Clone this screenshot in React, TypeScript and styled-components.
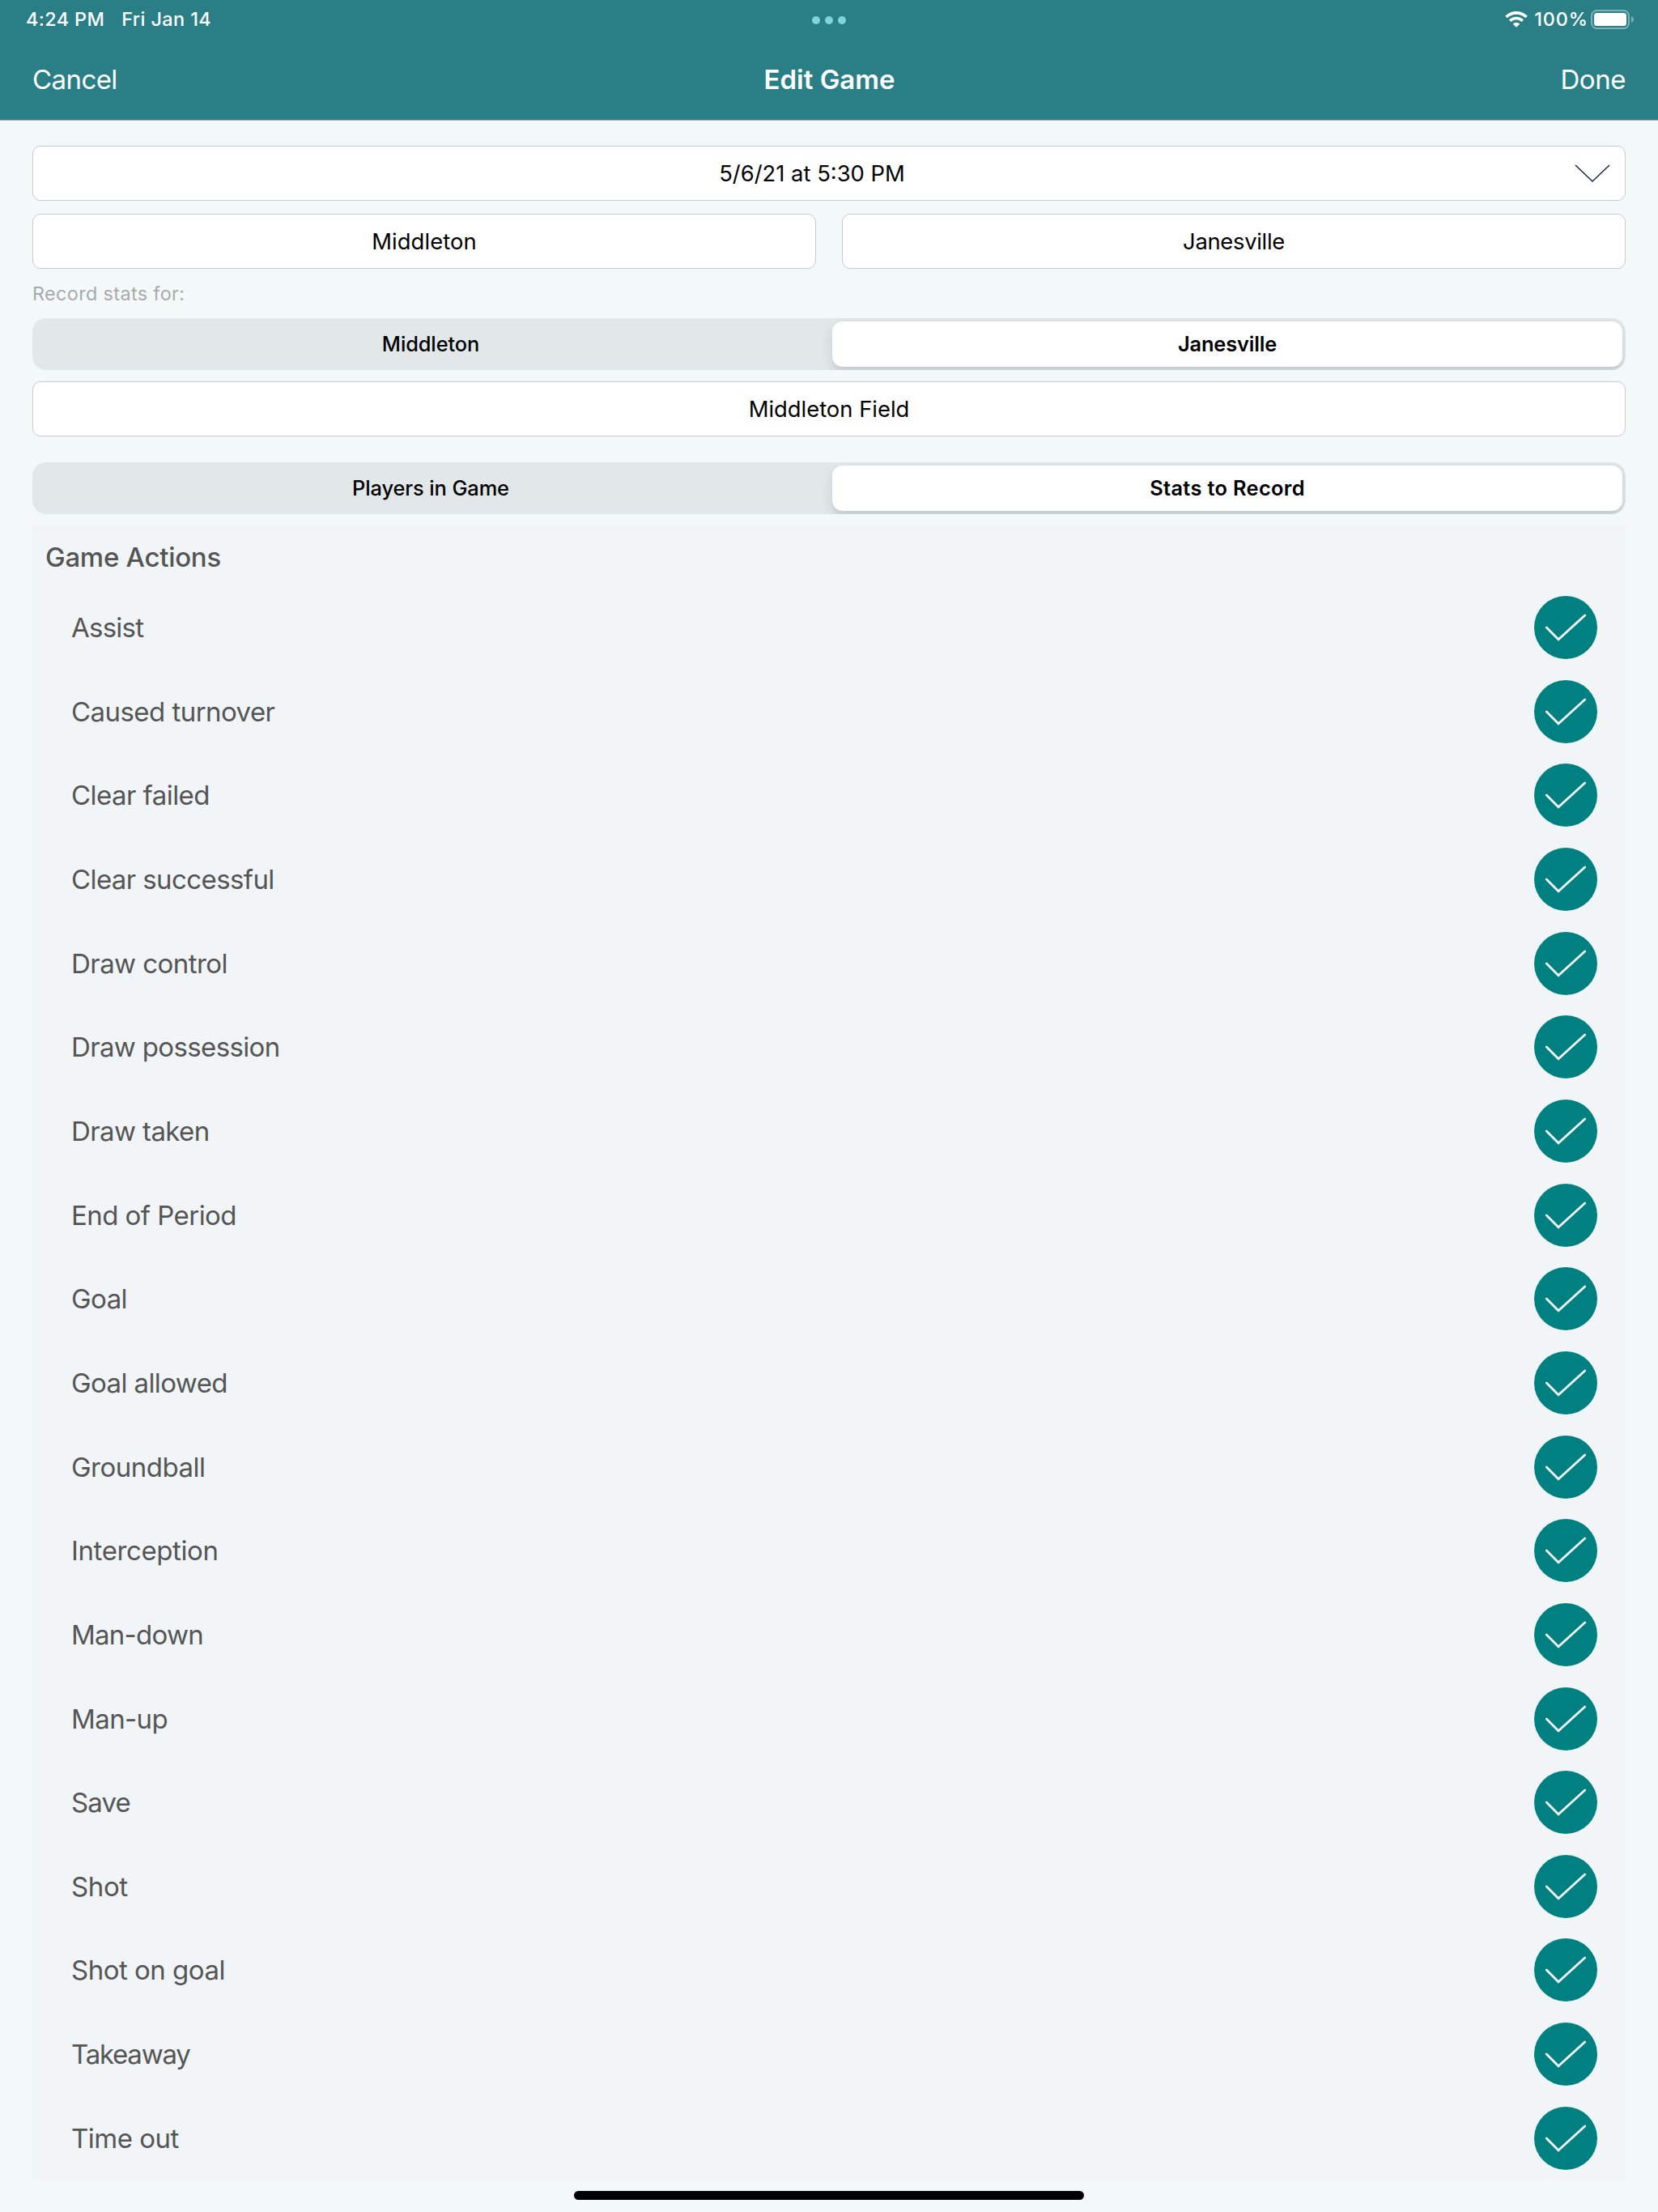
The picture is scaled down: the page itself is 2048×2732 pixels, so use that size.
import React from 'react';
import styled, { createGlobalStyle } from 'styled-components';

const GlobalStyle = createGlobalStyle`
  body {
    margin: 0;
    background: #f3f9f9;
    font-family: Inter, 'Liberation Sans', sans-serif;
  }
`;

const Screen = styled.div`
  box-sizing: border-box;
  display: flex;
  flex-direction: column;
  width: 2048px;
  height: 2732px;
  overflow: hidden;
  background: #f3f9f9;
`;

const Header = styled.header`
  background: #2a7f86;
  color: #fff;
  border-bottom: 1px solid #a6acad;
`;

const StatusBar = styled.div`
  display: grid;
  grid-template-columns: 1fr auto 1fr;
  align-items: center;
  height: 48px;
  padding: 0 30px 0 32px;
  font-size: 23.4px;
  font-weight: 500;
`;

const StatusLeft = styled.div`
  display: flex;
  gap: 21px;
  padding-bottom: 2px;
  letter-spacing: 0.4px;
`;

const StatusRight = styled.div`
  display: flex;
  justify-content: flex-end;
  align-items: center;
`;

const BatteryLevel = styled.span`
  margin: 0 3px 0 8px;
  padding-bottom: 2px;
  letter-spacing: 0.9px;
`;

const Dots = styled.div`
  display: flex;
  gap: 6px;
  padding: 2px 2px 0 0;
`;

const Dot = styled.span`
  width: 10px;
  height: 10px;
  border-radius: 50%;
  background: #7fd3d9;
`;

const NavBar = styled.nav`
  display: grid;
  grid-template-columns: 1fr auto 1fr;
  align-items: center;
  height: 100px;
  padding: 0 40px;
`;

const NavButton = styled.button<{ $end?: boolean }>`
  justify-self: ${(p) => (p.$end ? 'end' : 'start')};
  padding: 0;
  border: 0;
  background: none;
  color: #fff;
  font: 400 33px Inter, 'Liberation Sans', sans-serif;
  letter-spacing: ${(p) => (p.$end ? -0.45 : -0.58)}px;
`;

const Title = styled.h1`
  margin: 0;
  padding-left: 1px;
  font-size: 33px;
  font-weight: 600;
`;

const Form = styled.main`
  display: flex;
  flex-direction: column;
  padding: 31px 40px 0;
`;

const FieldRow = styled.div`
  display: grid;
  grid-template-columns: 1fr 1fr;
  gap: 32px;
  margin-top: 16px;
`;

const Field = styled.div<{ $top?: number; $tracking?: number }>`
  box-sizing: border-box;
  display: flex;
  align-items: center;
  justify-content: center;
  height: 68px;
  margin-top: ${(p) => p.$top ?? 0}px;
  border: 1px solid #c9cacb;
  border-radius: 10px;
  background: #fff;
  color: #000;
  font-size: 27.4px;
  letter-spacing: ${(p) => p.$tracking ?? 0}px;
`;

const DateText = styled.span`
  flex: 1;
  text-align: center;
  padding-left: 20px;
`;

const FieldChevron = styled.svg`
  width: 44px;
  height: 24px;
  margin-right: 18px;
`;

const Caption = styled.div`
  display: flex;
  align-items: center;
  height: 61px;
  color: #aaa;
  font-size: 23.4px;
  letter-spacing: 0.36px;
`;

const Segmented = styled.div<{ $top?: number }>`
  box-sizing: border-box;
  display: grid;
  grid-template-columns: 1fr 1fr;
  gap: 8px;
  height: 64px;
  margin-top: ${(p) => p.$top ?? 0}px;
  padding: 4px;
  overflow: hidden;
  border-radius: 17px;
  background: #e2e8ea;
`;

const Segment = styled.div<{ $selected?: boolean; $tracking?: number }>`
  box-sizing: border-box;
  display: flex;
  align-items: center;
  justify-content: center;
  padding-bottom: 2px;
  border-radius: 13px;
  background: ${(p) => (p.$selected ? '#fff' : 'transparent')};
  box-shadow: ${(p) =>
    p.$selected ? '0 6px 16px rgba(0, 0, 0, 0.11), 0 6px 2px rgba(0, 0, 0, 0.03)' : 'none'};
  color: #000;
  font-size: 25.4px;
  font-weight: ${(p) => (p.$selected ? 600 : 500)};
  letter-spacing: ${(p) => p.$tracking ?? -0.1}px;
`;

const Panel = styled.section`
  height: 2043px;
  margin-top: 14px;
  overflow: hidden;
  background: #f1f5f8;
  color: #555;
`;

const PanelTitle = styled.h2`
  box-sizing: border-box;
  display: flex;
  align-items: center;
  height: 74.17px;
  margin: 0;
  padding: 4px 16px 0;
  font-size: 33px;
  font-weight: 500;
  letter-spacing: -0.27px;
`;

const StatList = styled.ul`
  margin: 0;
  padding: 0;
  list-style: none;
`;

const StatRow = styled.li<{ $tracking?: number }>`
  box-sizing: border-box;
  display: flex;
  align-items: center;
  justify-content: space-between;
  height: 103.67px;
  padding: 0 35px 0 48px;
  font-size: 33px;
  letter-spacing: ${(p) => p.$tracking ?? -0.55}px;
`;

const HomeIndicator = styled.div`
  align-self: center;
  width: 630px;
  height: 11px;
  margin-top: 14px;
  border-radius: 6px;
  background: #000;
`;

const WifiIcon = () => (
  <svg width="28" height="20" viewBox="0 0 28 20" fill="none" stroke="#fff" strokeWidth="3.6">
    <path d="M1.48 7.08A17.7 17.7 0 0 1 26.52 7.08" />
    <path d="M6.15 11.75A11.1 11.1 0 0 1 21.85 11.75" />
    <path d="M14 19.8L9.7 15.4A6.2 6.2 0 0 1 18.3 15.4Z" fill="#fff" stroke="none" />
  </svg>
);

const BatteryIcon = () => (
  <svg width="53" height="24" viewBox="0 0 53 24">
    <rect x="1" y="1" width="46" height="22" rx="6.5" fill="none" stroke="#fff" strokeOpacity="0.4" strokeWidth="2" />
    <rect x="4" y="4" width="40" height="16" rx="3.5" fill="#fff" />
    <path d="M50 8c2 .8 3 2.300 3 4s-1 3.200-3 4z" fill="#fff" fillOpacity="0.4" />
  </svg>
);

const CheckIcon = () => (
  <svg width="78" height="78" viewBox="0 0 78 78">
    <circle cx="39" cy="39" r="39" fill="#008080" />
    <path
      d="M15.300 39L30 53.700L62.700 24"
      fill="none"
      stroke="#f1f5f9"
      strokeWidth="2.900"
      strokeLinecap="round"
      strokeLinejoin="miter"
    />
  </svg>
);

const stats: { name: string; tracking?: number }[] = [
  { name: 'Assist', tracking: -0.75 },
  { name: 'Caused turnover' },
  { name: 'Clear failed' },
  { name: 'Clear successful', tracking: -0.6 },
  { name: 'Draw control' },
  { name: 'Draw possession', tracking: -0.65 },
  { name: 'Draw taken', tracking: -0.6 },
  { name: 'End of Period' },
  { name: 'Goal' },
  { name: 'Goal allowed', tracking: -0.6 },
  { name: 'Groundball', tracking: -0.5 },
  { name: 'Interception', tracking: -0.4 },
  { name: 'Man-down', tracking: -0.75 },
  { name: 'Man-up', tracking: -0.6 },
  { name: 'Save', tracking: -0.9 },
  { name: 'Shot', tracking: -0.4 },
  { name: 'Shot on goal', tracking: -0.5 },
  { name: 'Takeaway', tracking: -1.25 },
  { name: 'Time out', tracking: -0.5 },
];

export default function App() {
  return (
    <Screen>
      <GlobalStyle />
      <Header>
        <StatusBar>
          <StatusLeft>
            <span>4:24 PM</span>
            <span>Fri Jan 14</span>
          </StatusLeft>
          <Dots>
            <Dot />
            <Dot />
            <Dot />
          </Dots>
          <StatusRight>
            <WifiIcon />
            <BatteryLevel>100%</BatteryLevel>
            <BatteryIcon />
          </StatusRight>
        </StatusBar>
        <NavBar>
          <NavButton>Cancel</NavButton>
          <Title>Edit Game</Title>
          <NavButton $end>Done</NavButton>
        </NavBar>
      </Header>
      <Form>
        <Field>
          <DateText>5/6/21 at 5:30 PM</DateText>
          <FieldChevron viewBox="0 0 44 24">
            <path d="M1 2L22 22L43 2" fill="none" stroke="#1f2950" strokeWidth="1.600" />
          </FieldChevron>
        </Field>
        <FieldRow>
          <Field $tracking={0.1}>Middleton</Field>
          <Field $tracking={-0.3}>Janesville</Field>
        </FieldRow>
        <Caption>Record stats for:</Caption>
        <Segmented>
          <Segment>Middleton</Segment>
          <Segment $selected $tracking={-0.15}>Janesville</Segment>
        </Segmented>
        <Field $top={14}>Middleton Field</Field>
        <Segmented $top={32}>
          <Segment>Players in Game</Segment>
          <Segment $selected $tracking={0.33}>Stats to Record</Segment>
        </Segmented>
        <Panel>
          <PanelTitle>Game Actions</PanelTitle>
          <StatList>
            {stats.map((stat) => (
              <StatRow key={stat.name} $tracking={stat.tracking}>
                <span>{stat.name}</span>
                <CheckIcon />
              </StatRow>
            ))}
          </StatList>
        </Panel>
      </Form>
      <HomeIndicator />
    </Screen>
  );
}
